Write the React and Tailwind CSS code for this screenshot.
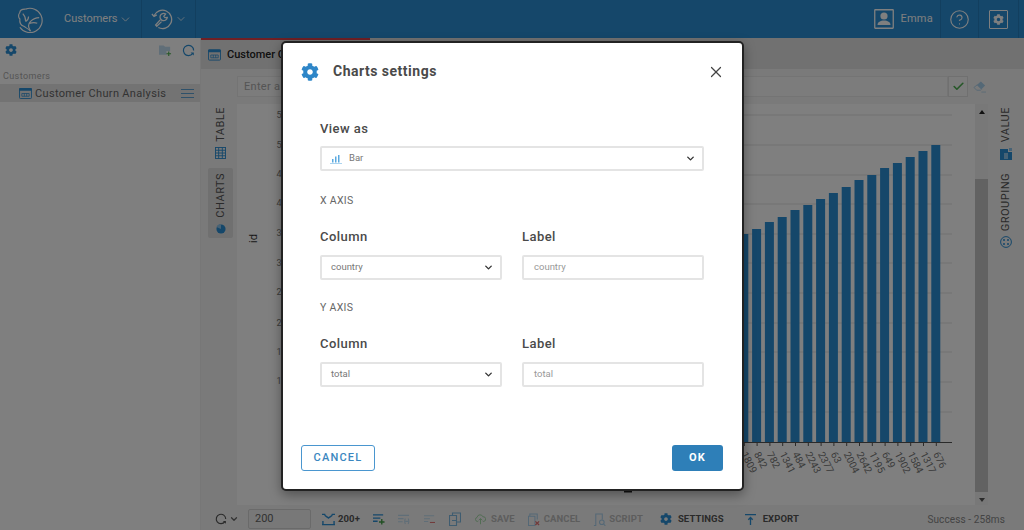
import React from "react";
import { FaCog } from "react-icons/fa";
import { ChevronDown, X, Check, CircleHelp } from "lucide-react";

const heights = [234, 229, 222, 217, 210, 205, 199, 193, 187, 180, 175, 168, 163, 157, 151, 145];
const labels = ["1809", "842", "782", "1341", "484", "2243", "2377", "63", "2004", "2642", "1195", "649", "1902", "1584", "1317", "676"];
const yTicks = [[115, "5"], [145, "5"], [174, "4"], [203, "4"], [233, "3"], [263, "3"], [292, "2"], [323, "2"], [352, "1"], [381, "1"]];
const gridY = [115, 145, 175, 204, 234, 263, 293, 323, 352, 382, 412];

const Refresh = ({ className }) => (
  <svg viewBox="0 0 16 16" className={className} fill="none" stroke="currentColor" strokeWidth="1.5">
    <path d="M13.2 11.5A6.3 6.3 0 1 1 14.3 8" />
    <path d="M10.5 10.6h4v3.6z" fill="currentColor" stroke="none" />
  </svg>
);

const TableIcon = ({ className }) => (
  <svg viewBox="0 0 14 12" className={className} fill="none" stroke="currentColor">
    <rect x=".5" y=".5" width="13" height="11" rx="1" />
    <rect x="0" y="0" width="14" height="3" rx="1" fill="currentColor" stroke="none" />
    <path d="M3 6h8v3H3zM5.7 6v3M8.3 6v3" strokeWidth=".8" />
  </svg>
);

const GridIcon = ({ className }) => (
  <svg viewBox="0 0 12 13" className={className} fill="none" stroke="currentColor" strokeWidth="1">
    <rect x=".5" y=".5" width="11" height="12" />
    <path d="M.5 3.500h11M.5 6.500h11M.5 9.500h11M4 .5v12M8 .5v12" />
  </svg>
);

const Logo = () => (
  <svg viewBox="0 0 28 28" className="w-[27px] h-[27px] text-white" fill="none" stroke="currentColor" strokeWidth="1.2">
    <path d="M9 3.200A12.600 12.600 0 1 1 3 22" />
    <path d="M9 3.200C5 3 3 5 2.800 7c-1.700 2-1.500 5 .2 6.500C2.500 17 4 20 7 21c3 2 5 3 7 5" />
    <path d="M6 8c2 2 3 5 3 8M9 16c2-1 3-2 3-5M14 26c-2-3-3-7 0-10 2-2 5-4 9-4M13 18c3-1 6-1 8 0" />
  </svg>
);

const WrenchClock = () => (
  <svg viewBox="0 0 24 24" className="w-[22px] h-[22px] text-white" fill="none" stroke="currentColor" strokeWidth="1.4">
    <path d="M3.300 8.500A10 10 0 1 1 8 21.300" />
    <path d="M1 6.500l2.300 2.600 3-1.600" />
    <path d="M16 6.500a4 4 0 1 0 1.800 3.800l-2.600.2-1.200-1.500L16 6.500zM10 13l-5 5.500 1.300 1.400 5.200-5" />
  </svg>
);

const HeaderRule = () => <div className="w-px h-full bg-black/10 shrink-0"></div>;

const ToolText = ({ children, className = "" }) => (
  <span className={`text-[9.500px] font-bold tracking-[0.1px] whitespace-nowrap ${className}`}>{children}</span>
);

const Field = ({ label, gap = "mt-[11px]", children }) => (
  <div className="flex-1 min-w-0">
    <div className="text-[13px] font-medium text-[#4a4a4a] tracking-[0.45px] leading-[15px]">{label}</div>
    <div className={gap}>{children}</div>
  </div>
);

const Select = ({ children }) => (
  <div className="h-[25px] flex items-center justify-between border-2 border-[#e4e4e4] rounded-[2px] pl-[9px] pr-[6px] text-[9.500px] text-[#777]">
    <div className="flex items-center">{children}</div>
    <ChevronDown className="w-[11px] h-[11px] text-[#333]" strokeWidth={3} />
  </div>
);

const TextBox = ({ children }) => (
  <div className="h-[25px] flex items-center border-2 border-[#e4e4e4] rounded-[2px] pl-[10px] text-[9.500px] text-[#999]">{children}</div>
);

const RailText = ({ children, className = "" }) => (
  <span className={`[writing-mode:vertical-rl] rotate-180 text-[11px] leading-[12px] tracking-[0.5px] ${className}`}>{children}</span>
);

export default function App() {
  return (
    <div className="relative w-[1024px] h-[530px] overflow-hidden bg-white text-[#333] font-['Roboto',sans-serif]">
      <header className="h-[38px] bg-[#2a8ed4] flex items-center text-white">
        <div className="ml-[17px]"><Logo /></div>
        <div className="ml-[20px] flex items-center text-[11px]">
          Customers
          <ChevronDown className="ml-[1px] w-[13px] h-[13px]" strokeWidth={1.5} />
        </div>
        <div className="ml-[9px] h-full"><HeaderRule /></div>
        <div className="ml-[9px]"><WrenchClock /></div>
        <ChevronDown className="ml-[2px] w-[12px] h-[12px]" strokeWidth={1.5} />
        <div className="ml-[8px] h-full"><HeaderRule /></div>
        <div className="ml-auto h-full flex items-center">
          <svg viewBox="0 0 20 20" className="w-[20px] h-[20px]" fill="none" stroke="currentColor">
            <rect x=".75" y=".75" width="18.500" height="18.500" rx=".5" strokeWidth="1.300" />
            <circle cx="10" cy="7" r="3.600" fill="currentColor" stroke="none" />
            <path d="M3.500 16c0-3 3-4.500 6.500-4.500s6.500 1.500 6.500 4.500z" fill="currentColor" stroke="none" />
          </svg>
          <span className="ml-[6px] text-[11px] tracking-[0.25px]">Emma</span>
          <div className="ml-[7px] h-full"><HeaderRule /></div>
          <CircleHelp className="ml-[8px] w-[21px] h-[21px]" strokeWidth={1.3} />
          <div className="ml-[8px] h-full"><HeaderRule /></div>
          <div className="ml-[10px] w-[19px] h-[19px] border-[1.5px] border-current rounded-[1px] flex items-center justify-center">
            <FaCog className="w-[11px] h-[11px]" />
          </div>
          <div className="ml-[10px] mr-[5px] h-full"><HeaderRule /></div>
        </div>
      </header>

      <div className="flex h-[492px]">
        <aside className="w-[201px] shrink-0 bg-white border-r border-[#eee]">
          <div className="h-[24px] flex items-center pl-[5px]">
            <FaCog className="w-[12px] h-[12px] text-[#2a8ed4]" />
            <svg viewBox="0 0 14 13" className="ml-auto w-[13px] h-[13px]">
              <path d="M0 1h5l1.500 1.500H12V7H8v4H0z" fill="#c0dcf0" />
              <path d="M10.500 7.500v5M8 10h5" stroke="#4caf50" strokeWidth="1.200" fill="none" />
            </svg>
            <Refresh className="ml-[10px] mr-[5px] w-[13px] h-[13px] text-[#2a8ed4]" />
          </div>
          <div className="mt-[8px] pl-[3px] h-[14px] text-[9px] leading-[12px] text-[#aaa] tracking-[0.4px]">Customers</div>
          <div className="h-[18px] bg-[#e6e6e6] flex items-center pl-[19px] pr-[6px]">
            <TableIcon className="w-[13px] h-[11px] text-[#2a8ed4]" />
            <span className="ml-[3px] pt-[2px] text-[11px] text-[#666] tracking-[0.33px] whitespace-nowrap">Customer Churn Analysis</span>
            <svg viewBox="0 0 13 9" className="ml-auto w-[13px] h-[9px] text-[#5fa3d4]" fill="none" stroke="currentColor" strokeWidth="1">
              <path d="M0 .5h13M0 4.500h13M0 8.500h13" />
            </svg>
          </div>
        </aside>

        <main className="flex-1 min-w-0 flex flex-col bg-[#f4f4f4]">
          <div className="h-[31px] bg-[#e2e2e2] flex">
            <div className="w-[169px] h-full border-t-2 border-[#e0404a] flex items-center pl-[7px]">
              <TableIcon className="w-[13px] h-[12px] text-[#2a8ed4]" />
              <span className="ml-[6px] pt-[1px] text-[11px] font-medium text-[#222] whitespace-nowrap">Customer Churn Analysis</span>
            </div>
          </div>
          <div className="h-[35px] flex items-center pl-[36px]">
            <div className="w-[711px] h-[21px] bg-[#f8f8f8] border border-[#e8e8e8] flex items-center pl-[6px] pt-[1px] text-[11px] text-[#aaa] tracking-[0.3px]">Enter a</div>
            <div className="w-[20px] h-[21px] bg-[#f8f8f8] border border-[#e0e0e0] flex items-center justify-center">
              <Check className="w-[13px] h-[13px] text-[#4caf50]" strokeWidth={3} />
            </div>
            <svg viewBox="0 0 14 13" className="ml-[5px] w-[13px] h-[13px]">
              <path d="M8.500 1 13 5.500 8 10.500H4L1 7.500z" fill="#a8d0ec" />
              <path d="M4.500 4.800 9.200 9.500 8 10.500H4L1 7.500z" fill="#f4f4f4" stroke="#a8d0ec" strokeWidth=".8" />
              <path d="M9 12.500h5" stroke="#a8d0ec" strokeWidth=".8" />
            </svg>
          </div>
          <div className="flex-1 min-h-0 flex">
            <div className="w-[36px] shrink-0 flex flex-col items-center pt-[3px] pl-[3px] text-[#555]">
              <RailText>TABLE</RailText>
              <GridIcon className="mt-[5px] w-[11px] h-[12px] text-[#2a8ed4]" />
              <div className="mt-[9px] w-[25px] h-[70px] bg-[#e0e0e0] rounded-[2px] flex flex-col items-center pt-[5px]">
                <RailText>CHARTS</RailText>
                <svg viewBox="0 0 12 12" className="mt-[6px] w-[10px] h-[10px] text-[#2a8ed4]">
                  <circle cx="6" cy="6" r="5.500" fill="currentColor" />
                  <path d="M6 6V0A6 6 0 0 0 .5 3.500z" fill="#8fc4ea" />
                </svg>
              </div>
            </div>
            <div className="w-[738px] shrink-0 bg-white">
              <svg viewBox="237 104 738 401" className="w-[738px] h-[401px] block">
                {gridY.map((y) => (
                  <line key={y} x1="281" x2="952" y1={y} y2={y} stroke="#e3e3e3" strokeWidth="1" />
                ))}
                {heights.map((t, i) => (
                  <rect key={i} x={739.300 + 12.8 * i} y={t} width="9" height={442 - t} fill="#2a8ed4" />
                ))}
                <line x1="281" x2="952" y1="442.500" y2="442.500" stroke="#555" strokeWidth="1" />
                {labels.map((l, i) => (
                  <g key={l}>
                    <line x1={744.300 + 12.8 * i} x2={744.300 + 12.8 * i} y1="442" y2="446" stroke="#555" />
                    <text transform={`translate(${741 + 12.8 * i},454) rotate(63)`} fontSize="10" fill="#777" fontFamily="Roboto, sans-serif">{l}</text>
                  </g>
                ))}
                {yTicks.map(([y, l]) => (
                  <text key={y} x="276.500" y={y + 3} fontSize="9" fill="#777" fontFamily="Roboto, sans-serif">{l}</text>
                ))}
                <text transform="translate(257,243) rotate(-90)" fontSize="11" fill="#333" fontFamily="Roboto, sans-serif">id</text>
                <rect x="624" y="491" width="8" height="1.500" fill="#222" />
              </svg>
            </div>
            <div className="w-[13px] shrink-0 bg-[#f0f0f0] flex flex-col items-center">
              <span className="mt-[6px] w-0 h-0 border-x-[3px] border-x-transparent border-b-[4px] border-b-[#222]"></span>
              <div className="mt-[65px] w-full h-[313px] bg-[#c4c4c4]"></div>
              <span className="mt-[6px] w-0 h-0 border-x-[3px] border-x-transparent border-t-[4px] border-t-[#555]"></span>
            </div>
            <div className="flex-1 flex flex-col items-center pt-[3px] text-[#555]">
              <RailText>VALUE</RailText>
              <svg viewBox="0 0 12 12" className="mt-[6px] w-[12px] h-[12px] text-[#2a8ed4]">
                <path d="M0 1h8v3h4v8H0z" fill="currentColor" />
                <path d="M4 5h4v6H4z" fill="#8fc4ea" />
                <path d="M9 0h3v3H9z" fill="#8fc4ea" />
              </svg>
              <RailText className="mt-[13px]">GROUPING</RailText>
              <svg viewBox="0 0 12 12" className="mt-[4px] w-[12px] h-[12px] text-[#2a8ed4]" fill="none" stroke="currentColor">
                <circle cx="6" cy="6" r="5.400" />
                <g fill="currentColor" stroke="none">
                  <circle cx="4" cy="4" r="1" /><circle cx="8" cy="4" r="1" /><circle cx="4" cy="8" r="1" /><circle cx="8" cy="8" r="1" />
                </g>
              </svg>
            </div>
          </div>
          <div className="h-[25px] flex items-center pt-[3px] pl-[14px] pr-[19px] text-[#666]">
            <Refresh className="w-[12px] h-[12px] text-[#555]" />
            <ChevronDown className="ml-[2px] w-[10px] h-[10px]" strokeWidth={3} />
            <div className="ml-[9px] w-[63px] h-[20px] border border-[#d5d5d5] rounded-[2px] bg-[#f0f0f0] pl-[6px] text-[11px] leading-[18px] text-[#666]">200</div>
            <svg viewBox="0 0 14 13" className="ml-[11px] w-[13px] h-[13px] text-[#2a8ed4]" fill="none" stroke="currentColor" strokeWidth="1.500">
              <path d="M0 1h3.500M10.500 1H14M0 12h14M3 1c0 2 2 2 4 4 2-2 4-2 4-4M1 8v4M13 8v4" />
            </svg>
            <ToolText className="ml-[3px] text-[#555]">200+</ToolText>
            <svg viewBox="0 0 13 12" className="ml-[13px] w-[12px] h-[12px] text-[#2a8ed4]" fill="none" stroke="currentColor" strokeWidth="1.500">
              <path d="M0 1.500h11M0 5h8M0 8.500h5" />
              <path d="M9.500 6v6M6.500 9.200h6" stroke="#43a047" />
            </svg>
            <svg viewBox="0 0 13 12" className="ml-[13px] w-[12px] h-[11px] text-[#c0dcf0]" fill="none" stroke="currentColor" strokeWidth="1.200">
              <path d="M0 1.500h12M0 5h6M0 8.500h5M8 5c-1 2-1 4 0 6M11 5c1 2 1 4 0 6M8 8h3" />
            </svg>
            <svg viewBox="0 0 13 12" className="ml-[14px] w-[11px] h-[11px] text-[#c0dcf0]" fill="none" stroke="currentColor" strokeWidth="1.200">
              <path d="M0 1.500h12M0 5h7M0 8.500h5" />
              <path d="M7 9.500h6" stroke="#e57373" />
            </svg>
            <svg viewBox="0 0 12 14" className="ml-[14px] w-[12px] h-[14px] text-[#7fb8e0]" fill="none" stroke="currentColor" strokeWidth="1.100">
              <path d="M3.500 3V1h8v9H8M.5 3.500h7v10h-7zM3 8.500h4" />
            </svg>
            <svg viewBox="0 0 14 14" className="ml-[14px] w-[11px] h-[13px] text-[#a0d8a4]" fill="none" stroke="currentColor" strokeWidth="1.200">
              <path d="M4 9.500H3a2.700 2.700 0 0 1-.3-5.300A3.800 3.800 0 0 1 10 3.500a3 3 0 0 1 1 6h-1M7 13V6M4.800 8 7 5.800 9.200 8" />
            </svg>
            <ToolText className="ml-[5px] text-[#bbb]">SAVE</ToolText>
            <svg viewBox="0 0 13 14" className="ml-[13px] w-[12px] h-[13px] text-[#a8d0ec]" fill="none" stroke="currentColor" strokeWidth="1.100">
              <path d="M2 3V1h8v6M.5 3.500h7v10h-7z" />
              <path d="M8 9l4 4M12 9l-4 4" stroke="#e57373" strokeWidth="1.400" />
            </svg>
            <ToolText className="ml-[4px] text-[#bbb]">CANCEL</ToolText>
            <svg viewBox="0 0 13 14" className="ml-[13px] w-[13px] h-[13px] text-[#a8d0ec]" fill="none" stroke="currentColor" strokeWidth="1.100">
              <path d="M3 13.500H.5M2.500 13V1h7v6" />
              <circle cx="9" cy="10" r="2.500" />
              <path d="M11 12l1.800 1.800" />
            </svg>
            <ToolText className="ml-[3px] text-[#bbb]">SCRIPT</ToolText>
            <FaCog className="ml-[17px] w-[12px] h-[12px] text-[#2a8ed4]" />
            <ToolText className="ml-[6px] text-[#555]">SETTINGS</ToolText>
            <svg viewBox="0 0 11 11" className="ml-[21px] w-[11px] h-[11px] text-[#2a8ed4]" fill="none" stroke="currentColor" strokeWidth="1.300">
              <path d="M0 .7h11M5.500 11V3.500M3.300 5.800l2.200-2.300 2.200 2.300" />
            </svg>
            <ToolText className="ml-[7px] text-[#555]">EXPORT</ToolText>
            <span className="ml-auto text-[10px] text-[#888] tracking-[0.1px] whitespace-nowrap">Success - 258ms</span>
          </div>
        </main>
      </div>

      {/* backdrop */}
      <div className="absolute inset-0 bg-black/50"></div>

      {/* dialog */}
      <div className="absolute left-[281px] top-[41px] w-[463px] h-[450px] bg-white border-2 border-[#222] rounded-[5px] shadow-[0_4px_12px_rgba(0,0,0,0.35)] flex flex-col px-[18px]">
        <div className="h-[56px] flex items-center pt-[1px] shrink-0">
          <FaCog className="w-[18px] h-[18px] text-[#2e86c8]" />
          <span className="ml-[14px] text-[14px] font-bold text-[#4a4a4a] tracking-[0.5px]">Charts settings</span>
          <X className="ml-auto -mr-[1px] w-[18px] h-[18px] text-[#444]" strokeWidth={1.6} />
        </div>
        <div className="pl-[19px] pr-[20px] mt-[22px] flex-1">
          <Field label="View as" gap="mt-[10px]">
            <Select>
              <svg viewBox="0 0 12 10" className="-ml-[1px] w-[12px] h-[10px] text-[#5aa9e0] mr-[7px]" fill="currentColor">
                <path d="M2 5h1.500v3.500H2zM5 2.500h1.500v6H5zM8 1h1.500v7.500H8zM0 9.500h12v.5H0z" />
              </svg>
              Bar
            </Select>
          </Field>
          <div className="mt-[23px] text-[10.500px] leading-[14px] text-[#666] tracking-[0.3px]">X AXIS</div>
          <div className="mt-[21px] flex gap-[20px]">
            <Field label="Column"><Select>country</Select></Field>
            <Field label="Label"><TextBox>country</TextBox></Field>
          </div>
          <div className="mt-[21px] text-[10.500px] leading-[14px] text-[#666] tracking-[0.3px]">Y AXIS</div>
          <div className="mt-[21px] flex gap-[20px]">
            <Field label="Column"><Select>total</Select></Field>
            <Field label="Label"><TextBox>total</TextBox></Field>
          </div>
        </div>
        <div className="flex justify-between pb-[18px]">
          <div className="w-[74px] h-[26px] pt-[1px] border border-[#4a96cf] rounded-[3px] flex items-center justify-center text-[11px] font-medium tracking-[1.2px] text-[#3b87c0]">CANCEL</div>
          <div className="w-[51px] h-[26px] pt-[1px] mr-[1px] bg-[#2e7fb8] rounded-[3px] flex items-center justify-center text-[11px] font-bold tracking-[1.2px] text-white">OK</div>
        </div>
      </div>
    </div>
  );
}
